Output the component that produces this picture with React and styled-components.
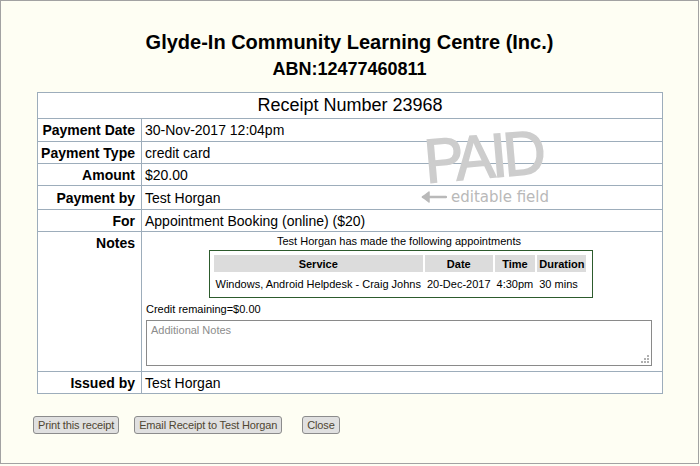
import styled, { createGlobalStyle } from 'styled-components'

const GlobalStyle = createGlobalStyle`
    body {
        margin: 0;
        font-family: "Liberation Sans", Arial, sans-serif;
        background: #fefef3;
    }
`

const Page = styled.div`
    box-sizing: border-box;
    width: 699px;
    height: 464px;
    border: 1px solid #a2a2a2;
    background: #fefef3;
    padding: 28px 36px 0 36px;
    color: #000;
`

const Heading = styled.h1`
    margin: 0;
    font-size: ${p => p.$size}px;
    font-weight: bold;
    line-height: 27px;
    text-align: center;
`

const Header = styled.header`
    margin-bottom: 9px;
`

const TableWrap = styled.div`
    position: relative;
    width: 626px;
`

const Receipt = styled.table`
    width: 626px;
    border-collapse: collapse;
    background: #fff;
    font-size: 14px;
`

const Cell = styled.td`
    border: 1px solid #9dadbb;
    padding: 0;
`

const Title = styled(Cell).attrs({ as: 'th' })`
    height: 25px;
    font-size: 18px;
    font-weight: normal;
    text-align: center;
`

const Label = styled(Cell).attrs({ as: 'th' })`
    width: 97px;
    height: ${p => p.$h || 21}px;
    padding: ${p => (p.$top ? '2px 6px 0 0' : '0 6px 0 0')};
    text-align: right;
    vertical-align: ${p => (p.$top ? 'top' : 'middle')};
    font-weight: bold;
    white-space: nowrap;
    line-height: 18px;
`

const Value = styled(Cell)`
    padding: 0 0 0 3px;
    line-height: 18px;
`

const NotesCell = styled(Cell)`
    padding: 2px 10px 5px 4px;
    font-size: 11px;
    vertical-align: top;
`

const Intro = styled.div`
    text-align: center;
    line-height: 15px;
`

const ApptBox = styled.div`
    width: fit-content;
    margin: 1px auto 0;
    padding: 2px 4px 2px 2px;
    border: 1px solid #2d5b2d;
    position: relative;
    left: 2px;
`

const Appts = styled.table`
    border-spacing: 2px;
    font-size: 11px;
`

const ApptHead = styled.th`
    background: #dcdcdc;
    font-weight: bold;
    height: 17px;
    padding: 0 2px;
    text-align: center;
`

const ApptCell = styled.td`
    height: 19px;
    padding: 0 2px;
    white-space: nowrap;
`

const Credit = styled.div`
    margin-top: 4px;
    line-height: 14px;
`

const NotesField = styled.div`
    position: relative;
    margin-top: 4px;
    width: 506px;
`

const NotesInput = styled.textarea`
    box-sizing: border-box;
    display: block;
    width: 506px;
    height: 46px;
    border: 1px solid #8a8a8a;
    padding: 3px 4px;
    font-family: "Liberation Sans", Arial, sans-serif;
    font-size: 11px;
    resize: none;
    outline: none;

    &::placeholder {
        color: #8c8c8c;
    }
`

const Grip = styled.svg`
    position: absolute;
    right: 3px;
    bottom: 3px;
`

const Stamp = styled.div`
    position: absolute;
    left: 384px;
    top: 39px;
    pointer-events: none;
    color: #cdcdcd;
`

const PaidWord = styled.div`
    font-family: "Liberation Sans", Arial, sans-serif;
    font-size: 62px;
    line-height: 62px;
    letter-spacing: -4px;
    -webkit-text-stroke: 1.6px #cdcdcd;
    transform: rotate(-5deg) scaleX(0.95);
    transform-origin: left bottom;
    margin-left: 6px;
`

const Hint = styled.div`
    display: flex;
    align-items: center;
    gap: 4px;
    margin-top: -5px;
    font-family: "DejaVu Sans", sans-serif;
    font-size: 15px;
    letter-spacing: 0;
    color: #b9b9b9;
`

const Actions = styled.div`
    display: flex;
    gap: 15px;
    margin: 22px 0 0 -4px;
`

const Button = styled.button`
    height: 18px;
    padding: 0 4px;
    margin-left: ${p => (p.$extra ? 5 : 0)}px;
    border: 1px solid #8c8c8c;
    border-radius: 3px;
    background: #e0e0e0;
    color: #4f4632;
    font-family: "Liberation Sans", Arial, sans-serif;
    font-size: 11px;
    line-height: 16px;
    letter-spacing: -0.15px;
`

const rows = [
    { label: 'Payment Date', value: '30-Nov-2017 12:04pm', h: 22 },
    { label: 'Payment Type', value: 'credit card', h: 21 },
    { label: 'Amount', value: '$20.00', h: 21 },
    { label: 'Payment by', value: 'Test Horgan', h: 23 },
    { label: 'For', value: 'Appointment Booking (online) ($20)', h: 21 },
]

const appointments = [
    { service: 'Windows, Android Helpdesk - Craig Johns', date: '20-Dec-2017', time: '4:30pm', duration: '30 mins' },
]

const App = () => {
    return (
        <>
            <GlobalStyle />
            <Page>
                <Header>
                    <Heading $size={20}>Glyde-In Community Learning Centre (Inc.)</Heading>
                    <Heading $size={18}>ABN:12477460811</Heading>
                </Header>
                <TableWrap>
                    <Receipt>
                        <tbody>
                            <tr>
                                <Title colSpan={2}>Receipt Number 23968</Title>
                            </tr>
                            {rows.map(r => (
                                <tr key={r.label}>
                                    <Label $h={r.h}>{r.label}</Label>
                                    <Value>{r.value}</Value>
                                </tr>
                            ))}
                            <tr>
                                <Label $top>Notes</Label>
                                <NotesCell>
                                    <Intro>Test Horgan has made the following appointments</Intro>
                                    <ApptBox>
                                        <Appts>
                                            <thead>
                                                <tr>
                                                    <ApptHead>Service</ApptHead>
                                                    <ApptHead>Date</ApptHead>
                                                    <ApptHead>Time</ApptHead>
                                                    <ApptHead>Duration</ApptHead>
                                                </tr>
                                            </thead>
                                            <tbody>
                                                {appointments.map(a => (
                                                    <tr key={a.service}>
                                                        <ApptCell>{a.service}</ApptCell>
                                                        <ApptCell>{a.date}</ApptCell>
                                                        <ApptCell>{a.time}</ApptCell>
                                                        <ApptCell>{a.duration}</ApptCell>
                                                    </tr>
                                                ))}
                                            </tbody>
                                        </Appts>
                                    </ApptBox>
                                    <Credit>Credit remaining=$0.00</Credit>
                                    <NotesField>
                                        <NotesInput placeholder="Additional Notes" />
                                        <Grip width="9" height="9" viewBox="0 0 9 9">
                                            <g fill="#b0b0b0">
                                                <rect x="7" y="1" width="2" height="2" />
                                                <rect x="4" y="4" width="2" height="2" />
                                                <rect x="7" y="4" width="2" height="2" />
                                                <rect x="1" y="7" width="2" height="2" />
                                                <rect x="4" y="7" width="2" height="2" />
                                                <rect x="7" y="7" width="2" height="2" />
                                            </g>
                                        </Grip>
                                    </NotesField>
                                </NotesCell>
                            </tr>
                            <tr>
                                <Label $h={21}>Issued by</Label>
                                <Value>Test Horgan</Value>
                            </tr>
                        </tbody>
                    </Receipt>
                    <Stamp>
                        <PaidWord>PAID</PaidWord>
                        <Hint>
                            <svg width="26" height="12" viewBox="0 0 26 12">
                                <path d="M2 6 H25" stroke="#b9b9b9" strokeWidth="2.5" strokeLinecap="round" />
                                <path d="M8 1 L1.5 6 L8 11 Z" fill="#b9b9b9" stroke="#b9b9b9" strokeWidth="1.5" strokeLinejoin="round" />
                            </svg>
                            <span>editable field</span>
                        </Hint>
                    </Stamp>
                </TableWrap>
                <Actions>
                    <Button>Print this receipt</Button>
                    <Button>Email Receipt to Test Horgan</Button>
                    <Button $extra>Close</Button>
                </Actions>
            </Page>
        </>
    )
}

export default App
